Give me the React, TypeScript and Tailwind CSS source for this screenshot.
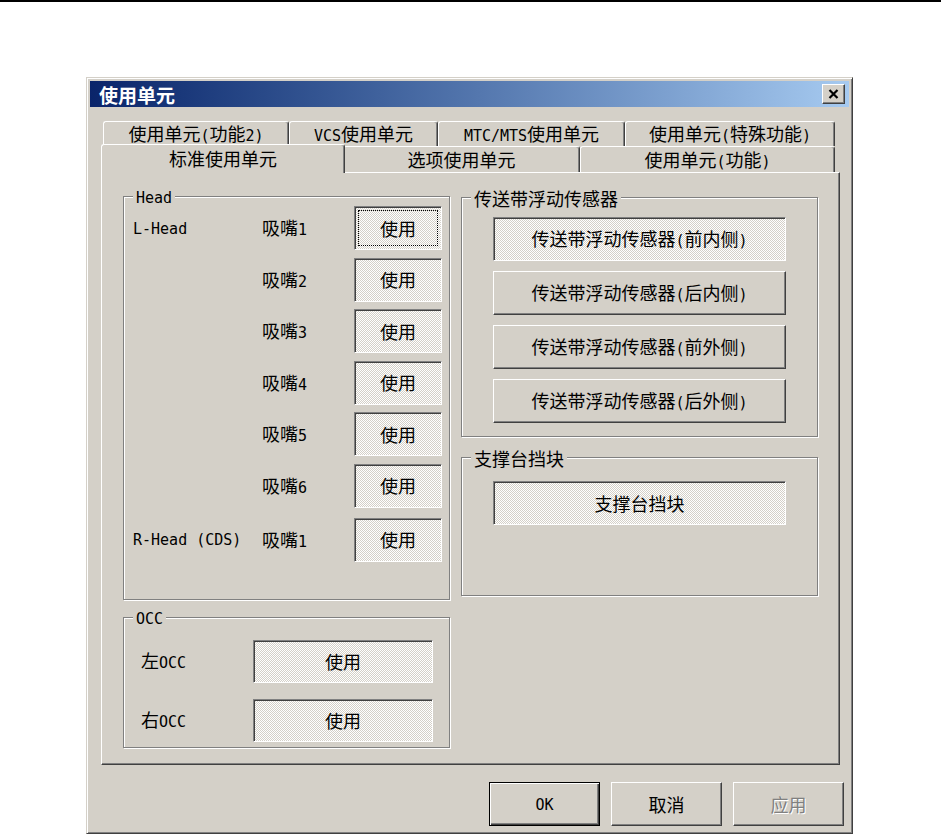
import React from "react";

// 한자/전각 문자는 CJK 폰트, 반각 문자는 고정폭 폰트로 나눠서 렌더링
const cjkClass = "font-['Noto_Sans_CJK_SC',sans-serif] text-[18px]";
const latClass = "font-['DejaVu_Sans_Mono',monospace] text-[15px]";

const Txt = ({ s }: { s: string }) => {
  const runs: { wide: boolean; t: string }[] = [];
  for (const ch of s) {
    const wide = /[\u3000-\u9fff\uff00-\uffef]/.test(ch);
    const last = runs[runs.length - 1];
    if (last && last.wide === wide) last.t += ch;
    else runs.push({ wide, t: ch });
  }
  return (
    <span className="whitespace-pre leading-none">
      {runs.map((r, i) => (
        <span key={i} className={r.wide ? cjkClass : latClass}>
          {r.t}
        </span>
      ))}
    </span>
  );
};

const raised =
  "border border-t-white border-l-white border-r-[#404040] border-b-[#404040] bg-[#d4d0c8] shadow-[inset_-1px_-1px_0_#808080]";
const sunken =
  "border border-t-[#808080] border-l-[#808080] border-r-white border-b-white bg-[image:repeating-conic-gradient(#ffffff_0%_25%,#d4d0c8_0%_50%)] bg-[length:2px_2px] shadow-[inset_1px_1px_0_#404040]";

type BtnProps = {
  label: string;
  pressed?: boolean;
  focused?: boolean;
  className?: string;
};

const ToggleBtn = ({ label, pressed, focused, className = "" }: BtnProps) => (
  <div
    className={`flex items-center justify-center ${pressed ? sunken : raised} ${
      focused ? "outline-1 outline-dotted outline-black outline-offset-[-5px]" : ""
    } ${className}`}
  >
    <Txt s={label} />
  </div>
);

const Group = ({
  label,
  className,
  children,
}: {
  label: string;
  className: string;
  children?: React.ReactNode;
}) => (
  <div
    className={`relative border border-[#808080] shadow-[inset_1px_1px_0_#ffffff,1px_1px_0_#ffffff] ${className}`}
  >
    <span className="absolute left-[9px] top-0 -translate-y-1/2 bg-[#d4d0c8] px-[3px] leading-none">
      <Txt s={label} />
    </span>
    {children}
  </div>
);

const tabBase =
  "flex items-center justify-center rounded-t-[3px] border-t border-l border-r border-t-white border-l-white border-r-[#404040] bg-[#d4d0c8] shadow-[inset_-1px_0_0_#808080]";

const headRows = [
  { head: "L-Head", nozzle: "吸嘴1" },
  { head: "", nozzle: "吸嘴2" },
  { head: "", nozzle: "吸嘴3" },
  { head: "", nozzle: "吸嘴4" },
  { head: "", nozzle: "吸嘴5" },
  { head: "", nozzle: "吸嘴6" },
];

const sensors = ["前内侧", "后内侧", "前外侧", "后外侧"];

export default function App() {
  return (
    <div className="h-[834px] overflow-hidden bg-white text-black">
      <div className="h-[2px] bg-black" />

      {/* 다이얼로그 창 */}
      <div className="ml-[86px] mt-[75px] w-[767px] border border-t-[#d4d0c8] border-l-[#d4d0c8] border-r-[#404040] border-b-[#404040] bg-[#d4d0c8] p-[3px] shadow-[inset_1px_1px_0_#ffffff,inset_-1px_-1px_0_#808080]">
        {/* 타이틀 바 */}
        <div className="flex h-[26px] items-center justify-between bg-linear-to-r from-[#0a246a] to-[#a6caf0] pl-[9px] pr-[4px]">
          <span className="font-['Noto_Sans_CJK_SC',sans-serif] text-[19px] font-bold leading-none text-white">
            使用单元
          </span>
          <div className={`flex h-[20px] w-[23px] items-center justify-center ${raised}`}>
            <svg width="11" height="10" viewBox="0 0 11 10">
              <path d="M1.5 1 L9.5 9 M9.5 1 L1.5 9" stroke="#000" strokeWidth="2.2" />
            </svg>
          </div>
        </div>

        {/* 탭 1행 */}
        <div className="ml-[13px] mt-[14px] flex h-[25px] w-[732px]">
          <div className={`${tabBase} h-[25px] w-[186px]`}>
            <Txt s="使用单元(功能2)" />
          </div>
          <div className={`${tabBase} h-[25px] w-[149px]`}>
            <Txt s="VCS使用单元" />
          </div>
          <div className={`${tabBase} h-[25px] w-[187px]`}>
            <Txt s="MTC/MTS使用单元" />
          </div>
          <div className={`${tabBase} h-[25px] w-[210px]`}>
            <Txt s="使用单元(特殊功能)" />
          </div>
        </div>

        {/* 탭 2행 */}
        <div className="ml-[13px] flex h-[26px] w-[732px] items-start">
          <div className={`${tabBase} relative z-10 -mx-[2px] -mt-[2px] h-[29px] w-[244px] pb-[2px]`}>
            <Txt s="标准使用单元" />
          </div>
          <div className={`${tabBase} h-[26px] w-[237px]`}>
            <Txt s="选项使用单元" />
          </div>
          <div className={`${tabBase} h-[26px] w-[255px]`}>
            <Txt s="使用单元(功能)" />
          </div>
        </div>

        {/* 탭 패널 */}
        <div className="ml-[11px] flex h-[593px] w-[739px] gap-[11px] border border-t-white border-l-white border-r-[#404040] border-b-[#404040] pl-[21px] pt-[23px] shadow-[inset_-1px_-1px_0_#808080]">
          {/* 왼쪽 열 */}
          <div className="flex flex-col">
            <Group label="Head" className="h-[404px] w-[327px] pl-[9px] pt-[9px]">
              <div className="flex flex-col gap-[7.6px]">
                {headRows.map((row, i) => (
                  <div key={i} className="grid h-[44px] grid-cols-[129px_92px_88px] items-center">
                    <Txt s={row.head} />
                    <Txt s={row.nozzle} />
                    <ToggleBtn label="使用" pressed focused={i === 0} className="h-[44px]" />
                  </div>
                ))}
                <div className="mt-[2.4px] grid h-[44px] grid-cols-[129px_92px_88px] items-center">
                  <Txt s="R-Head (CDS)" />
                  <Txt s="吸嘴1" />
                  <ToggleBtn label="使用" pressed className="h-[44px]" />
                </div>
              </div>
            </Group>

            <Group
              label="OCC"
              className="mt-[17px] flex h-[131px] w-[327px] flex-col gap-[16px] pl-[17px] pt-[22px]"
            >
              {["左OCC", "右OCC"].map((name) => (
                <div key={name} className="flex items-center">
                  <div className="w-[112px]">
                    <Txt s={name} />
                  </div>
                  <ToggleBtn label="使用" pressed className="h-[43px] w-[180px]" />
                </div>
              ))}
            </Group>
          </div>

          {/* 오른쪽 열 */}
          <div className="flex flex-col">
            <Group
              label="传送带浮动传感器"
              className="mt-[1px] flex h-[240px] w-[357px] flex-col items-center gap-[10px] pt-[19px]"
            >
              {sensors.map((pos, i) => (
                <ToggleBtn
                  key={pos}
                  label={`传送带浮动传感器(${pos})`}
                  pressed={i === 0}
                  className="h-[44px] w-[293px]"
                />
              ))}
            </Group>

            <Group
              label="支撑台挡块"
              className="mt-[20px] flex h-[139px] w-[357px] flex-col items-center pt-[23px]"
            >
              <ToggleBtn label="支撑台挡块" pressed className="h-[44px] w-[293px]" />
            </Group>
          </div>
        </div>

        {/* 하단 버튼 */}
        <div className="mb-[4px] mt-[17px] flex justify-end gap-[11px] pr-[5px]">
          <div className="flex h-[44px] w-[111px] items-center justify-center border border-black bg-[#d4d0c8] shadow-[inset_1px_1px_0_#ffffff,inset_-1px_-1px_0_#404040,inset_-2px_-2px_0_#808080]">
            <Txt s="OK" />
          </div>
          <div className={`flex h-[44px] w-[111px] items-center justify-center ${raised}`}>
            <Txt s="取消" />
          </div>
          <div
            className={`flex h-[44px] w-[111px] items-center justify-center text-[#808080] [text-shadow:1px_1px_0_#ffffff] ${raised}`}
          >
            <Txt s="应用" />
          </div>
        </div>
      </div>
    </div>
  );
}
